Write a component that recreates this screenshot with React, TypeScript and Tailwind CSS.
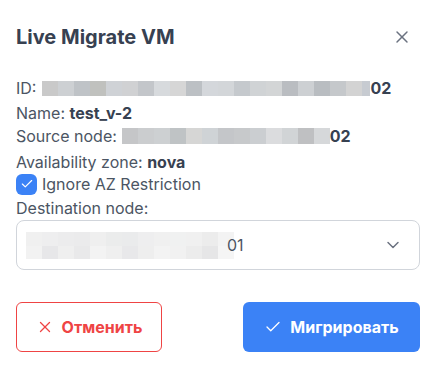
import { Check, ChevronDown, X } from "lucide-react";

const idBlur = ["#c9c9c9", "#cdd0d3", "#bfc3c7", "#c0c1be", "#cfd2d6", "#d0d1d3", "#c3c6ca", "#d7dadd", "#d6d6d6", "#bcc0c4", "#d4d7db", "#d3d6d9", "#c5c9cd", "#d0d3d5", "#d3d5d6", "#babdc1", "#cdd0d3", "#b9bdc1", "#c5c8cb", "#d3d3d3"];
const srcBlur = ["#c5c6c8", "#cbcdcf", "#cdd0d2", "#bfc3c5", "#d6d6d5", "#cfd3d6", "#c4c6c9", "#c7c9cb", "#cbced1", "#dbdcde", "#d1d4d6", "#bfc0c2", "#d6d8da"];
const selTop = ["#f0f0f0", "#eeeeef", "#ececed", "#ebebec", "#efefef", "#ebecec", "#eaebec", "#eeeeef", "#f0f0f0", "#f0f1f1", "#f0f0f0", "#ececec", "#f3f3f3"];
const selBottom = ["#f2f2f2", "#e7e7e9", "#efefef", "#e9e9ea", "#f3f3f3", "#efefef", "#e8e8ea", "#eeeeee", "#f3f3f3", "#f1f1f1", "#ececec", "#e6e6e7", "#f5f5f5"];

function Blur({ colors, h, last }: { colors: string[]; h: string; last?: string }) {
  return (
    <span className="inline-flex">
      {colors.map((c, i) => (
        <span key={i} className={`w-4 ${h}`} style={{ backgroundColor: c }} />
      ))}
      {last && <span className={`w-2 ${h}`} style={{ backgroundColor: last }} />}
    </span>
  );
}

export default function App() {
  return (
    <div className="w-[436px] h-[373px] overflow-hidden bg-white px-4 pt-[25px] text-[16px] text-[#4b5563] font-['Inter',sans-serif]">
      <div className="flex h-6 items-center justify-between">
        <h2 className="text-[20px] font-bold text-[#374151] leading-6">Live Migrate VM</h2>
        <X className="size-5 mr-[8px] text-[#6b7280]" strokeWidth={1.75} />
      </div>

      <div className="leading-6">
        <div className="flex items-center h-6 mt-[27px]">
          <span>ID:</span>
          <span className="ml-[6px] flex">
            <Blur colors={idBlur} h="h-[15px]" last="#c7cbd1" />
          </span>
          <span className="font-bold text-[#374151]">02</span>
        </div>
        <div className="h-6 mt-[1px]">
          Name: <span className="font-bold text-[#374151]">test_v-2</span>
        </div>
        <div className="flex items-center h-6 mt-[-1px]">
          <span>Source node:</span>
          <span className="ml-[5px] flex">
            <Blur colors={srcBlur} h="h-[16px]" />
          </span>
          <span className="font-bold text-[#374151]">02</span>
        </div>
        <div className="h-6 mt-[2px]">
          Availability zone: <span className="font-bold text-[#374151]">nova</span>
        </div>
        <label className="flex items-center gap-[5px] h-6 mt-[-2px]">
          <span className="flex size-[21px] items-center justify-center rounded-md bg-[#3b82f6]">
            <Check className="size-[14px] text-white" strokeWidth={2} />
          </span>
          <span>Ignore AZ Restriction</span>
        </label>
        <div className="h-6">Destination node:</div>
      </div>

      <div className="flex h-[50px] items-center justify-between rounded-lg border border-[#d1d5db] pl-[9px] pr-[16px]">
        <div className="flex items-center">
          <span className="flex flex-col">
            <Blur colors={selTop} h="h-[14px]" />
            <Blur colors={selBottom} h="h-[13px]" />
          </span>
          <span className="ml-[-7px] text-[#4b5563]">01</span>
        </div>
        <ChevronDown className="size-5 text-[#6b7280]" strokeWidth={1.75} />
      </div>

      <div className="mt-[32px] flex items-center justify-between">
        <button className="flex h-[50px] w-[146px] items-center justify-center gap-2 rounded-md border border-[#ef4444] bg-white font-bold text-[#ef4444]">
          <X className="size-[18px]" strokeWidth={1.75} />
          Отменить
        </button>
        <button className="flex h-[50px] w-[177px] items-center justify-center gap-2 rounded-md bg-[#3b82f6] font-bold text-white">
          <Check className="size-[18px]" strokeWidth={1.75} />
          Мигрировать
        </button>
      </div>
    </div>
  );
}
